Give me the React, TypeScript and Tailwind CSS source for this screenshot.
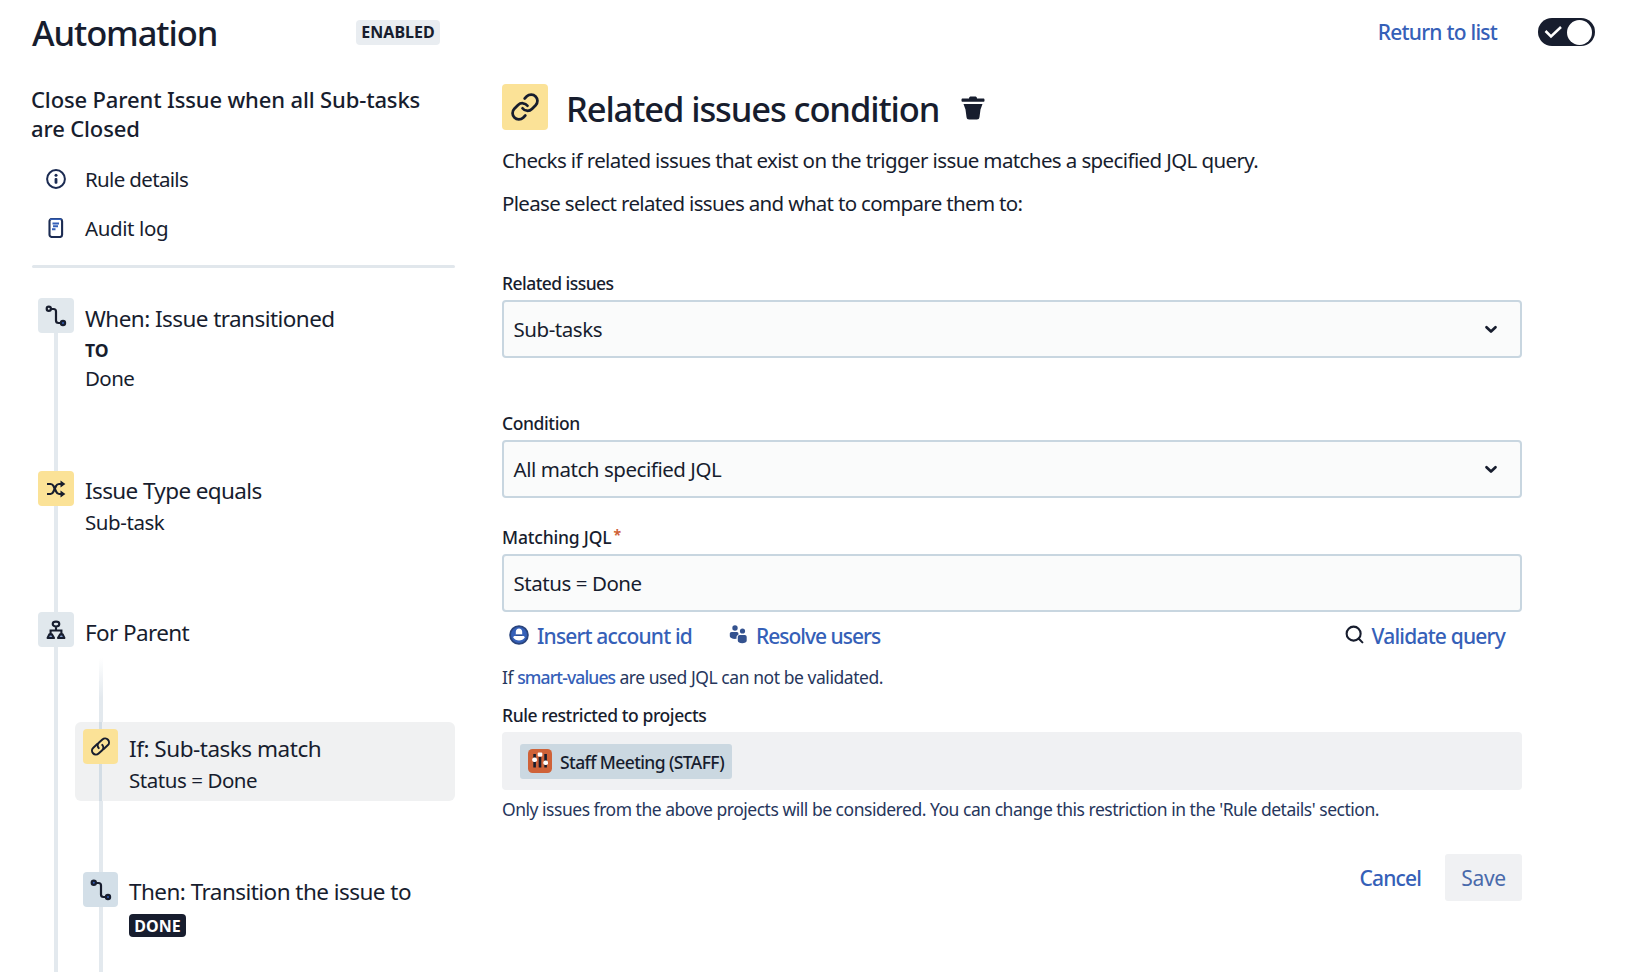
import type { ReactNode } from "react";
import { Link, Search } from "lucide-react";

function ChainIcon() {
  return (
    <svg width="21" height="21" viewBox="0 0 24 24" fill="none" stroke="currentColor" strokeWidth="2.300" strokeLinecap="round">
      <g transform="rotate(-42 12 12)">
        <path d="M11.500 7.500H5a4.500 4.500 0 0 0 0 9h5.200a4.500 4.500 0 0 0 4.500-4.500" />
        <path d="M12.500 16.500H19a4.500 4.500 0 0 0 0-9h-5.200A4.500 4.500 0 0 0 9.300 12" />
      </g>
    </svg>
  );
}

function TransitionIcon({ nodeFill }: { nodeFill: string }) {
  return (
    <svg width="22" height="22" viewBox="0 0 22 22" fill="none" stroke="currentColor" strokeWidth="2.200">
      <path d="M6 4h2.500c1.700 0 2.500.8 2.500 2.500V15.500c0 1.700.8 2.500 2.500 2.500H16" />
      <circle cx="3.800" cy="3.800" r="2.100" fill={nodeFill} />
      <circle cx="18" cy="18" r="2.100" fill="#3560b8" />
    </svg>
  );
}

function ShuffleIcon() {
  return (
    <svg width="20" height="18" viewBox="0 0 20 18" fill="none" stroke="currentColor" strokeWidth="2.200">
      <path d="M1 4h3.500c1.500 0 2.300.7 3 2l2.600 5.500c.7 1.500 1.500 2.500 3 2.500H16" />
      <path d="M1 14h3.500c1.500 0 2.300-1 3-2.500L10 6c.7-1.300 1.600-2 3-2h3" />
      <path d="M14.500.6 19.400 4 14.500 7.400zM14.500 10.600 19.400 14 14.500 17.400z" fill="currentColor" stroke="none" />
    </svg>
  );
}

function BranchIcon() {
  return (
    <svg width="20" height="20" viewBox="0 0 20 20" fill="none" stroke="currentColor" strokeWidth="2.100">
      <path d="M10 1.600c2.200 0 3.300 1.100 3.300 2.400S12 6.500 10 6.500 6.700 5.300 6.700 4 7.800 1.600 10 1.600zM10 6.500v4M4.600 14v-3.500h10.800V14" />
      <path d="M3.300 14.400h2.700l2 3.600H1.600zM14 14.400h2.700l1.700 3.600H12z" fill="#3560b8" fillOpacity=".55" strokeLinejoin="round" />
    </svg>
  );
}

function InfoIcon() {
  return (
    <svg width="20" height="20" viewBox="0 0 20 20" className="text-[#1b2b52]">
      <circle cx="10" cy="10" r="8.900" fill="none" stroke="currentColor" strokeWidth="2" />
      <circle cx="10" cy="6.300" r="1.500" fill="currentColor" />
      <rect x="8.600" y="9" width="2.800" height="5.700" rx="1" fill="currentColor" />
    </svg>
  );
}

function LogIcon() {
  return (
    <svg width="16" height="20" viewBox="0 0 16 20" fill="none" className="text-[#1b2b52]">
      <rect x="1.500" y="1" width="12.600" height="18" rx="2.200" stroke="currentColor" strokeWidth="2.100" />
      <path d="M2 1.200h11.500" stroke="#3560b8" strokeWidth="1.600" />
      <path d="M4.500 5.400h6.500M5 8.300h5M4 11.200h3.500" stroke="#3560b8" strokeWidth="2" />
    </svg>
  );
}

function TrashIcon() {
  return (
    <svg width="24" height="24" viewBox="0 0 24 24" fill="currentColor">
      <path d="M8 2.600C8 1.200 9 .6 10 .6h4c1 0 2 .6 2 2h6.300c.7 0 1.200.5 1.200 1.100v1c0 .7-.5 1.100-1.200 1.100H1.700C1 5.800.5 5.400.5 4.700v-1c0-.6.5-1.100 1.200-1.100zM2.500 8h19l-2 5.500-1 7.500c-.2 1.700-1 2.500-2.600 2.500H8.100c-1.600 0-2.400-.8-2.600-2.500l-1-7.500z" />
    </svg>
  );
}

function AccountIcon() {
  return (
    <svg width="20" height="20" viewBox="0 0 20 20">
      <circle cx="10" cy="10" r="8.900" fill="#3560b8" stroke="#2a447c" strokeWidth="1.800" />
      <path d="M10 3.400c1.900 0 3.200 1.400 3.200 3.300v2.800H6.800V6.700c0-1.900 1.300-3.300 3.200-3.300z" fill="#fff" />
      <path d="M4.200 12.600c0-1.100.8-1.700 1.800-1.700h8c1 0 1.800.6 1.800 1.700-1.300 2-3.300 3-5.800 3s-4.500-1-5.800-3z" fill="#fff" />
      <path d="M7 10.200h6" stroke="#2a447c" strokeWidth="1" />
    </svg>
  );
}

function UsersIcon() {
  return (
    <svg width="19" height="19" viewBox="0 0 19 19" fill="#34528f">
      <circle cx="6" cy="3" r="2.700" />
      <circle cx="13.500" cy="6" r="2.600" />
      <path d="M.8 8.800c0-1 .8-1.800 1.800-1.800h5.100c.8 0 1.400.4 1.700 1v1.800c-1.200.4-1.900 1.400-1.900 2.700v1.300c-3.600.4-6.700-.7-6.700-2.500z" />
      <path d="M8.800 12c0-1.100.8-1.900 1.900-1.900h5.100c1.100 0 1.900.8 1.900 1.900v3.800c0 1.400-2 2.400-4.500 2.400s-4.400-1-4.400-2.400z" />
    </svg>
  );
}

function ProjectIcon() {
  return (
    <svg width="24" height="24" viewBox="0 0 24 24">
      <rect width="24" height="24" rx="4.500" fill="#cf6238" />
      <path d="M6.600 5v13.500M12 8v10.500M17.600 5v13.500" stroke="#171d2e" strokeWidth="2.600" />
      <rect x="4.300" y="8.500" width="4.600" height="4.500" rx="1.800" fill="#fff" />
      <rect x="9.700" y="3.400" width="4.600" height="4.200" rx="1" fill="#fff" />
      <rect x="15.400" y="11.500" width="4.600" height="4.500" rx="1.800" fill="#fff" />
    </svg>
  );
}

function ChevronIcon() {
  return (
    <svg width="14" height="9" viewBox="0 0 14 9" fill="none" stroke="currentColor" strokeWidth="2.700" strokeLinecap="round" strokeLinejoin="round">
      <path d="M2.500 2.200 7 6.500 11.500 2.200" />
    </svg>
  );
}

function Tile({ className, children }: { className: string; children: ReactNode }) {
  return <div className={`relative flex h-[35px] shrink-0 items-center justify-center rounded ${className}`}>{children}</div>;
}

function Step({ className, tile, children }: { className: string; tile: ReactNode; children: ReactNode }) {
  return (
    <div className={`flex items-start ${className}`}>
      {tile}
      <div className="whitespace-nowrap">{children}</div>
    </div>
  );
}

function Sidebar() {
  return (
    <aside className="ml-8 flex w-[423px] shrink-0 flex-col pt-[13px]">
      <div className="flex h-10 items-center justify-between pr-[15px]">
        <h1 className="text-[34.5px] leading-10 font-medium tracking-[-1.1px]">Automation</h1>
        <span className="-mt-0.5 flex h-[25px] w-[84px] items-center justify-center rounded bg-[#e9edf1] text-[16px] font-bold">ENABLED</span>
      </div>
      <h2 className="-ml-px mt-8 w-[400px] text-[22px] leading-[29px] font-medium tracking-[-0.14px]">
        Close Parent Issue when all Sub-tasks
        <br />
        are Closed
      </h2>
      <nav className="mt-[21px] flex flex-col gap-[19px] pl-3.5 text-[20.500px] leading-[30px]">
        <a className="flex items-center gap-[19px] tracking-[-0.66px]">
          <InfoIcon />
          Rule details
        </a>
        <a className="flex items-center gap-[21px] pl-0.5 tracking-[-0.4px]">
          <LogIcon />
          Audit log
        </a>
      </nav>
      <div className="mt-[22px] h-[3px] rounded-full bg-[#e1e7ec]" />

      <div className="relative flex flex-1 flex-col pt-[30px] pl-1.5">
        <div className="absolute top-[30px] bottom-0 left-[22px] w-[4px] bg-[#e3e9ee]" />
        <Step className="h-[173px] gap-[11px]" tile={<Tile className="w-9 bg-[#e1e8ed]"><TransitionIcon nodeFill="none" /></Tile>}>
          <p className="pt-1.5 text-[22.500px] leading-[30px] tracking-[-0.56px]">When: Issue transitioned</p>
          <p className="pt-1 text-[17.500px] leading-6 font-bold">TO</p>
          <p className="pt-0.5 text-[20.500px] leading-7 tracking-[-0.6px]">Done</p>
        </Step>
        <Step className="h-[141px] gap-[11px]" tile={<Tile className="w-9 bg-[#fbe297]"><ShuffleIcon /></Tile>}>
          <p className="pt-[5px] text-[22.500px] leading-[30px] tracking-[-0.62px]">Issue Type equals</p>
          <p className="pt-0.5 text-[20.500px] leading-7 tracking-[-0.43px]">Sub-task</p>
        </Step>
        <Step className="h-[110px] gap-[11px]" tile={<Tile className="w-9 bg-[#e1e8ed]"><BranchIcon /></Tile>}>
          <p className="pt-1.5 text-[22.500px] leading-[30px] tracking-[-0.62px]">For Parent</p>
        </Step>
        <div className="relative ml-[37px] flex-1">
          <div className="absolute -top-16 bottom-0 left-[23.500px] w-[4px] bg-linear-to-b from-white to-[#e3e9ee] to-[40px]" />
          <div className="relative h-[79px] rounded-md bg-[#f0f1f2]">
            <div className="absolute inset-y-0 left-[24px] w-[3px] bg-[#d3dde5]" />
            <Step className="relative gap-[11px] pt-[7px] pl-2" tile={<Tile className="w-[35px] bg-[#fbe297]"><ChainIcon /></Tile>}>
              <p className="pt-[5px] text-[22.500px] leading-[30px] tracking-[-0.48px]">If: Sub-tasks match</p>
              <p className="pt-0.5 text-[20.500px] leading-7 tracking-[-0.45px]">Status = Done</p>
            </Step>
          </div>
          <Step className="mt-[71px] gap-[11px] pl-2" tile={<Tile className="w-[35px] bg-[#d3dfe8]"><TransitionIcon nodeFill="#3560b8" /></Tile>}>
            <p className="pt-[5px] text-[22.500px] leading-[30px] tracking-[-0.54px]">Then: Transition the issue to</p>
            <span className="mt-[7px] flex h-[23px] w-[57px] items-center justify-center rounded bg-[#171d2e] text-[16px] font-bold text-white">DONE</span>
          </Step>
        </div>
      </div>
    </aside>
  );
}

function Field({ className, label, required, children }: { className: string; label: string; required?: boolean; children: ReactNode }) {
  return (
    <div className={className}>
      <div className="flex h-6 text-[17.500px] leading-6 font-medium">
        {label}
        {required && <span className="pl-0.5 text-[14px] leading-[20px] font-bold text-[#cf6238]">*</span>}
      </div>
      <div className="mt-[5px] flex h-[58px] items-center justify-between rounded border-2 border-[#c8d6e0] bg-[#fafbfb] pr-[22px] pl-[9.500px] text-[20.500px] leading-[30px] tracking-[-0.45px]">
        {children}
      </div>
    </div>
  );
}

function Main() {
  return (
    <main className="ml-[47px] flex flex-1 flex-col">
      <div className="flex h-16 items-center justify-end gap-[41px] pr-[34px]">
        <a className="pt-0.5 text-[21px] font-medium tracking-[-0.77px] text-[#3560b8]">Return to list</a>
        <button className="flex h-7 w-[57px] items-center justify-between rounded-full bg-[#171d2e] pr-[3px] pl-1.5">
          <svg width="19" height="14" viewBox="0 0 19 14" fill="none" stroke="#fff" strokeWidth="2.500">
            <path d="M1.500 6l5.500 5.500L17 2" />
          </svg>
          <span className="size-[25px] shrink-0 rounded-full bg-white" />
        </button>
      </div>

      <div className="mt-5 w-[1020px]">
        <div className="flex h-[46px] items-center whitespace-nowrap">
          <div className="flex size-[46px] items-center justify-center rounded bg-[#fbe297]">
            <Link size={30} strokeWidth={2.200} />
          </div>
          <h2 className="pt-1 pl-[18px] text-[34.500px] leading-[46px] font-medium tracking-[-1.100px]">Related issues condition</h2>
          <button className="ml-[22px] pt-0.5">
            <TrashIcon />
          </button>
        </div>
        <p className="mt-[15px] text-[20.500px] leading-[30px] tracking-[-0.61px] whitespace-nowrap">
          Checks if related issues that exist on the trigger issue matches a specified JQL query.
        </p>
        <p className="mt-[13px] text-[20.500px] leading-[30px] tracking-[-0.66px] whitespace-nowrap">
          Please select related issues and what to compare them to:
        </p>

        <Field className="mt-[53px] tracking-[-0.55px]" label="Related issues">
          Sub-tasks
          <ChevronIcon />
        </Field>
        <Field className="mt-[53px] tracking-[-0.4px]" label="Condition">
          All match specified JQL
          <ChevronIcon />
        </Field>
        <Field className="mt-[27px] tracking-[-0.18px]" label="Matching JQL" required>
          Status = Done
        </Field>

        <div className="mt-[9px] flex h-[30px] items-center pr-[17px] pl-[7px] text-[21px] leading-[30px] font-medium whitespace-nowrap text-[#3560b8]">
          <span className="-mt-0.5">
            <AccountIcon />
          </span>
          <a className="ml-2 tracking-[-0.84px]">Insert account id</a>
          <span className="ml-[37px] -mt-1">
            <UsersIcon />
          </span>
          <a className="ml-2 tracking-[-1px]">Resolve users</a>
          <Search size={21} strokeWidth={2.400} className="-mt-1 ml-auto text-[#171d2e]" />
          <a className="ml-[7px] tracking-[-0.8px]">Validate query</a>
        </div>

        <p className="mt-[14px] text-[17.500px] leading-6 tracking-[-0.44px] text-[#26365c]">
          If <a className="font-medium tracking-[-0.85px] text-[#3560b8]">smart-values</a> are used JQL can not be validated.
        </p>
        <div className="mt-[14px] text-[17.500px] leading-6 font-medium tracking-[-0.42px]">Rule restricted to projects</div>
        <div className="mt-[5px] flex h-[58px] items-center rounded bg-[#f0f1f3] pl-[18px]">
          <div className="flex h-[35px] w-[212px] items-center rounded-[3px] bg-[#cbd8e1] pl-2 text-[17.500px] font-medium tracking-[-0.6px] whitespace-nowrap">
            <ProjectIcon />
            <span className="ml-2 pt-0.5">Staff Meeting (STAFF)</span>
          </div>
        </div>
        <p className="mt-[7px] text-[17.500px] leading-6 tracking-[-0.48px] whitespace-nowrap text-[#26365c]">
          Only issues from the above projects will be considered. You can change this restriction in the 'Rule details' section.
        </p>

        <div className="mt-[33px] flex h-[47px] items-stretch justify-end gap-6 text-[21px]">
          <button className="pt-[3px] font-medium tracking-[-0.85px] text-[#3560b8]">Cancel</button>
          <button className="w-[77px] rounded-[3px] bg-[#f0f1f3] pt-[3px] tracking-[-0.3px] text-[#4a6aab]">Save</button>
        </div>
      </div>
    </main>
  );
}

export default function App() {
  return (
    <div className="flex h-[972px] w-[1629px] overflow-hidden bg-white font-['Noto_Sans','Open_Sans',sans-serif] text-[#171d2e]">
      <Sidebar />
      <Main />
    </div>
  );
}
